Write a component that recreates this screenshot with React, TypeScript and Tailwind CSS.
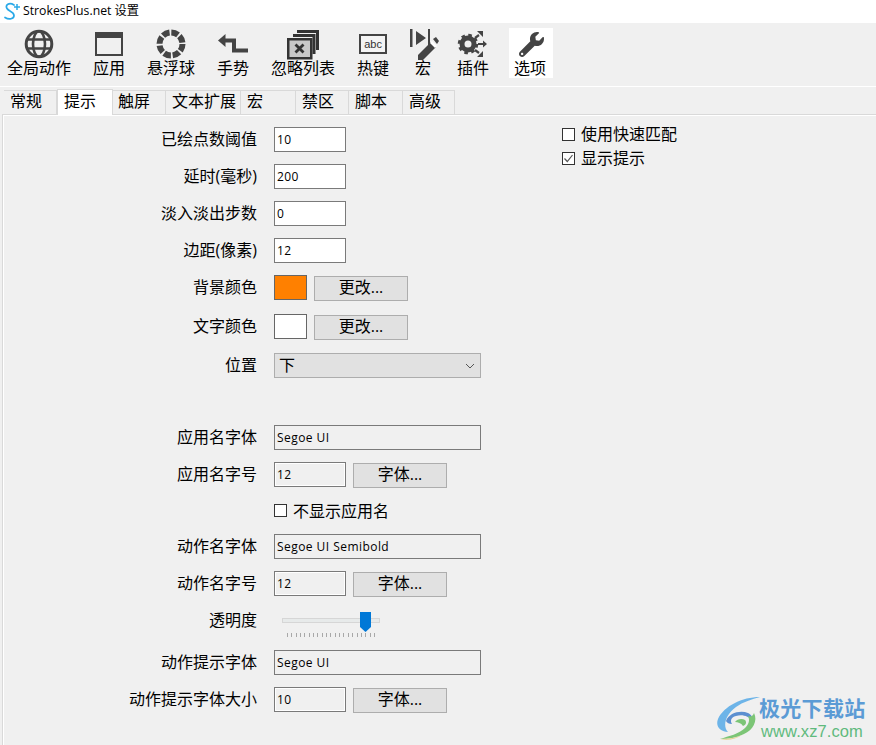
import React from "react";
import { FaWrench } from "react-icons/fa";

const cjk = "font-['Noto_Sans_CJK_SC','Noto_Sans',sans-serif]";
const ui = "font-['Open_Sans','Noto_Sans_CJK_SC',sans-serif]";

const GlobeIcon = () => (
  <svg width="32" height="32" viewBox="0 0 32 32" fill="none" stroke="#444" strokeWidth="2.6">
    <circle cx="16" cy="16" r="12.8" strokeWidth="3" />
    <ellipse cx="16" cy="16" rx="6" ry="12.8" />
    <path d="M3.5 11.5h25M3.5 20.5h25" />
  </svg>
);

const WindowIcon = () => (
  <svg width="32" height="32" viewBox="0 0 32 32">
    <path fillRule="evenodd" fill="#444" d="M2 4h28v24H2zM4 10v16h24V10z" />
  </svg>
);

const RingIcon = () => (
  <svg width="32" height="32" viewBox="0 0 32 32" fill="none">
    <circle cx="16" cy="16" r="11.5" stroke="#444" strokeWidth="6" strokeDasharray="7.2 1.83" />
  </svg>
);

const GestureIcon = () => (
  <svg width="32" height="32" viewBox="0 0 32 32" fill="none">
    <path d="M31 22.500H17V12.500H7" stroke="#444" strokeWidth="4" />
    <path d="M1 12.500 8.500 6v13z" fill="#444" />
  </svg>
);

const IgnoreIcon = () => (
  <svg width="36" height="32" viewBox="0 0 36 32" className="shrink-0">
    <path d="M12 2h22v20h-3V5H12z" fill="#333" />
    <path d="M8 6h22.500v20h-3V9H8z" fill="#333" />
    <rect x="3.250" y="11.250" width="23" height="19" fill="#c8c8c8" stroke="#333" strokeWidth="2.500" />
    <path d="M10.500 16.500l8 8M18.500 16.500l-8 8" stroke="#333" strokeWidth="2.800" />
  </svg>
);

const AbcIcon = () => (
  <div className="relative w-[28px] h-[20px] border-[2px] border-[#444] bg-[#f4f4f4] flex items-center justify-center">
    <span className="font-['Liberation_Sans',sans-serif] text-[11px] leading-none text-[#333]">abc</span>
  </div>
);

const MacroIcon = () => (
  <svg width="32" height="32" viewBox="0 0 32 32">
    <path d="M3 1h2.500v18H3zM9 3l10 7-10 7zM21 1h2v16h-2z" fill="#444" />
    <path d="M11 27l13-13 5 5-13 13h-5z" fill="#444" />
    <path d="M23 15l2-2 5 5-2 2z" fill="#fff" />
    <path d="M26 11l3-2 3 4-2 3z" fill="#444" />
  </svg>
);

const PluginIcon = () => (
  <svg width="32" height="32" viewBox="0 0 32 32" fill="none">
    <circle cx="11" cy="16" r="6" stroke="#444" strokeWidth="5" />
    <circle cx="11" cy="16" r="9" stroke="#444" strokeWidth="2.500" strokeDasharray="3.600 3.470" />
    <path d="M18 10l4-3M21 16h5M18 22l4 3" stroke="#444" strokeWidth="2.200" />
    <path d="M20 3h6v6zM30 16l-4-3.500v7zM20 29h6v-6z" fill="#444" />
  </svg>
);

const tools = [
  { label: "全局动作", icon: <GlobeIcon />, pad: "px-[6px]" },
  { label: "应用", icon: <WindowIcon />, pad: "px-[6px]" },
  { label: "悬浮球", icon: <RingIcon />, pad: "px-[6px]" },
  { label: "手势", icon: <GestureIcon />, pad: "px-[6px]" },
  { label: "忽略列表", icon: <IgnoreIcon />, pad: "px-[6px]" },
  { label: "热键", icon: <AbcIcon />, pad: "px-[6px]" },
  { label: "宏", icon: <MacroIcon />, pad: "px-[2px]" },
  { label: "插件", icon: <PluginIcon />, pad: "px-[6px]" },
];

const tabs = [
  { label: "常规", cls: "w-[53px] pl-[6px]" },
  { label: "提示", cls: "w-[56px] pl-[6px]", active: true },
  { label: "触屏", cls: "w-[53px] pl-[5px]" },
  { label: "文本扩展", cls: "w-[75px] pl-[6px]" },
  { label: "宏", cls: "w-[55px] pl-[6px]" },
  { label: "禁区", cls: "w-[53px] pl-[6px]" },
  { label: "脚本", cls: "w-[54px] pl-[6px]" },
  { label: "高级", cls: "w-[52px] pl-[6px]" },
];

function Row({ label, className, children }: { label?: string; className?: string; children: React.ReactNode }) {
  return (
    <div className={`flex items-center h-[25px] ${className ?? ""}`}>
      <div className={`w-[255px] mr-[17px] mb-[2px] text-right text-[16px] leading-[22px] text-black ${ui}`}>{label}</div>
      {children}
    </div>
  );
}

function TextBox({ value, wide }: { value: string; wide?: boolean }) {
  return (
    <input
      readOnly
      value={value}
      className={`h-[25px] border border-[#7a7a7a] px-[2px] text-[12px] tracking-[0.45px] text-black outline-none ${ui} ${
        wide ? "w-[207px] bg-[#f0f0f0]" : "w-[72px] bg-white"
      }`}
    />
  );
}

function SizeBox({ value }: { value: string }) {
  return (
    <input
      readOnly
      value={value}
      className={`h-[25px] w-[72px] border border-[#7a7a7a] bg-[#f0f0f0] shadow-[inset_0_0_0_1px_#fff] px-[2px] text-[12px] tracking-[0.45px] text-black outline-none ${ui}`}
    />
  );
}

function ActionButton({ label }: { label: string }) {
  return (
    <button className={`h-[25px] w-[94px] ml-[7px] mt-[2px] pb-[3px] bg-[#e1e1e1] border border-[#adadad] text-[16px] leading-none text-black ${ui}`}>
      {label}
    </button>
  );
}

function Check({ label, checked }: { label: string; checked?: boolean }) {
  return (
    <label className="flex items-center h-[24px] text-[16px] leading-[20px] text-black">
      <span className="w-[13px] h-[13px] border border-[#333] bg-white flex items-center justify-center mr-[6px]">
        {checked && (
          <svg width="11" height="11" viewBox="0 0 11 11" fill="none">
            <path d="M1.500 5.500 4.300 8.500 9.500 2" stroke="#555" strokeWidth="1.200" />
          </svg>
        )}
      </span>
      <span className="mb-[2px]">{label}</span>
    </label>
  );
}

function OpacitySlider() {
  return (
    <div className="w-[98px] ml-[8px] relative mt-[19px]">
      <div className="h-[5px] bg-[#e7eaea] border border-[#d6d6d6] mt-[-6px]" />
      <svg className="absolute left-[78px] top-[-12px]" width="11" height="20" viewBox="0 0 11 20">
        <path d="M0 0h11v15l-5.500 5L0 15z" fill="#0078d7" />
      </svg>
      <div className="flex justify-between mt-[10px] px-[5px]">
        {Array.from({ length: 21 }).map((_, i) => (
          <div key={i} className="w-px h-[4px] bg-[#a8a8a8]" />
        ))}
      </div>
    </div>
  );
}

function Watermark() {
  return (
    <div className="absolute left-[716px] top-[692px] w-[160px] h-[53px] flex">
      <svg width="46" height="50" viewBox="0 0 46 50" fill="none" className="mt-[2px] shrink-0">
        <path d="M44 3C26 3 8 12 2 25c-3 8 3 13 10 13C6 32 10 20 20 13 27 8 36 5 44 3z" fill="#6db4e8" />
        <path d="M10 27c3-8 14-11 22-8 4 2 5 5 4 8-3-5-10-7-16-5-5 1-6 5-4 8-3 0-5-1-6-3z" fill="#5b8fd0" />
        <path d="M38 19c4 8-1 17-10 21-8 4-16 5-24 5 9-3 19-5 25-11 4-4 5-8 3-12 3 1 5 0 6-3z" fill="#7cc576" />
        <path d="M19 28c2-3 7-4 10-2 2 2 1 5-2 6-2-3-5-4-8-4z" fill="#7cc576" />
        <path d="M4 45c8 0 16-1 22-4-6 4-14 6-22 4z" fill="#e6cf8a" />
      </svg>
      <div className="ml-[-3px] flex flex-col">
        <span className={`${cjk} text-[21px] leading-[24px] font-bold text-[#5b9bd5] tracking-[0.3px] mt-[3px]`}>极光下载站</span>
        <span className="font-['Liberation_Sans',sans-serif] text-[16.5px] leading-[18px] text-[#5fba7d] mt-[3px] ml-[2px] tracking-[0.1px]">www.xz7.com</span>
      </div>
    </div>
  );
}

export default function App() {
  return (
    <div className={`relative w-[876px] h-[745px] overflow-hidden bg-[#f0f0f0] flex flex-col ${cjk}`}>
      <div className="h-[23px] bg-white flex items-center shrink-0">
        <svg width="18" height="20" viewBox="0 0 18 20" fill="none" className="ml-[3px] mr-[2px]">
          <path d="M11 3C6 0 2 3 4 6.500c1.500 3 7 3 7 7 0 3.500-5 4.500-9 2" stroke="#2aa9e8" strokeWidth="1.700" strokeLinecap="round" />
          <path d="M14 2v6M11 5h6" stroke="#2aa9e8" strokeWidth="1.500" />
        </svg>
        <span className="font-['Open_Sans','Noto_Sans_CJK_SC',sans-serif] text-[12.25px] text-black">StrokesPlus.net 设置</span>
      </div>

      <div className="h-[63px] shrink-0 flex items-start pt-[5px] pl-[1px] gap-[10px]">
        {tools.map((t) => (
          <div key={t.label} className={`flex flex-col items-center ${t.pad} h-[50px]`}>
            <div className="h-[32px] w-[32px] flex items-center justify-center">{t.icon}</div>
            <span className="text-[16px] leading-[14px] text-black whitespace-nowrap">{t.label}</span>
          </div>
        ))}
        <div className="ml-[4px] flex flex-col items-center px-[6px] h-[50px] w-[44px] bg-white">
          <div className="h-[32px] w-[32px] flex items-center justify-center">
            <FaWrench className="text-[#444] text-[25px]" />
          </div>
          <span className="text-[16px] leading-[14px] text-black whitespace-nowrap mr-[2px]">选项</span>
        </div>
      </div>

      <div className="h-px bg-white shrink-0" />

      <div className="h-[27px] shrink-0 flex items-end pl-[4px]">
        {tabs.map((t) => (
          <div
            key={t.label}
            className={`${t.cls} text-[16px] border-t border-r border-[#d9d9d9] whitespace-nowrap ${
              t.active ? "h-[26px] bg-white border-l leading-[21px] mb-[-1px] relative" : "h-[24px] leading-[19px]"
            }`}
          >
            {t.label}
          </div>
        ))}
      </div>

      <div className="flex-1 ml-[2px] border-l border-t border-[#d9d9d9] shadow-[inset_1px_1px_0_#fff] flex">
        <div className="w-[480px] pt-[12px] flex flex-col gap-[12px] -ml-[1px]">
          <Row label="已绘点数阈值"><TextBox value="10" /></Row>
          <Row label="延时(毫秒)"><TextBox value="200" /></Row>
          <Row label="淡入淡出步数"><TextBox value="0" /></Row>
          <Row label="边距(像素)"><TextBox value="12" /></Row>
          <Row label="背景颜色">
            <div className="w-[33px] h-[25px] bg-[#ff8000] border border-[#666]" />
            <ActionButton label="更改..." />
          </Row>
          <Row label="文字颜色" className="mt-[2px]">
            <div className="w-[33px] h-[25px] bg-white border border-[#666]" />
            <ActionButton label="更改..." />
          </Row>
          <Row label="位置" className="mt-[2px]">
            <div className="w-[207px] h-[25px] bg-[#e1e1e1] border border-[#adadad] flex items-center justify-between pl-[4px] pr-[5px] text-[16px]">
              <span className="mb-[4px]">下</span>
              <svg width="10" height="6" viewBox="0 0 10 6" fill="none">
                <path d="M1 1l4 4 4-4" stroke="#555" strokeWidth="1" />
              </svg>
            </div>
          </Row>
          <Row label="应用名字体" className="mt-[35px]"><TextBox value="Segoe UI" wide /></Row>
          <Row label="应用名字号">
            <SizeBox value="12" />
            <ActionButton label="字体..." />
          </Row>
          <Row className="-mt-[1px]">
            <Check label="不显示应用名" />
          </Row>
          <Row label="动作名字体" className="-mt-[1px]"><TextBox value="Segoe UI Semibold" wide /></Row>
          <Row label="动作名字号">
            <SizeBox value="12" />
            <ActionButton label="字体..." />
          </Row>
          <Row label="透明度">
            <OpacitySlider />
          </Row>
          <Row label="动作提示字体" className="mt-[5px]"><TextBox value="Segoe UI" wide /></Row>
          <Row label="动作提示字体大小">
            <SizeBox value="10" />
            <ActionButton label="字体..." />
          </Row>
        </div>
        <div className="ml-[80px] pt-[7px] flex flex-col">
          <Check label="使用快速匹配" />
          <Check label="显示提示" checked />
        </div>
      </div>

      <Watermark />
    </div>
  );
}
